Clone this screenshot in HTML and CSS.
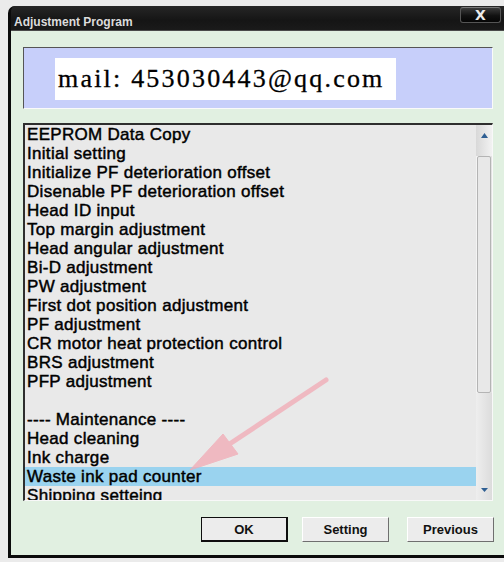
FILE: index.html
```html
<!DOCTYPE html>
<html>
<head>
<meta charset="utf-8">
<link rel="stylesheet" href="styles.css">
</head>
<body>
<div class="window">
  <div class="titlebar">
    <span class="title">Adjustment Program</span>
    <span class="close">X</span>
  </div>
  <div class="client">
    <div class="banner">
      <div class="mailbox">mail: 453030443@qq.com</div>
    </div>
    <div class="listbox">
      <ul class="items">
        <li>EEPROM Data Copy</li>
        <li>Initial setting</li>
        <li>Initialize PF deterioration offset</li>
        <li>Disenable PF deterioration offset</li>
        <li>Head ID input</li>
        <li>Top margin adjustment</li>
        <li>Head angular adjustment</li>
        <li>Bi-D adjustment</li>
        <li>PW adjustment</li>
        <li>First dot position adjustment</li>
        <li>PF adjustment</li>
        <li>CR motor heat protection control</li>
        <li>BRS adjustment</li>
        <li>PFP adjustment</li>
        <li>&nbsp;</li>
        <li>---- Maintenance ----</li>
        <li>Head cleaning</li>
        <li>Ink charge</li>
        <li class="selected">Waste ink pad counter</li>
        <li>Shipping setteing</li>
      </ul>
      <div class="scrollbar">
        <div class="sb-up">
          <svg width="7" height="5" viewBox="0 0 7 5"><polygon points="3.5,0 7,5 0,5" fill="#2f5f93"/></svg>
        </div>
        <div class="sb-thumb"></div>
        <div class="sb-track"></div>
        <div class="sb-down">
          <svg width="7" height="4" viewBox="0 0 7 4"><polygon points="0,0 7,0 3.5,4" fill="#2f5f93"/></svg>
        </div>
      </div>
    </div>
    <div class="buttons">
      <button class="btn btn-default">OK</button>
      <button class="btn btn-setting">Setting</button>
      <button class="btn btn-previous">Previous</button>
    </div>
  </div>
</div>
<svg class="pointer-arrow" width="504" height="562" viewBox="0 0 504 562">
  <g fill="#f2a9b4" stroke="#f2a9b4" opacity="0.75">
    <line x1="326" y1="380" x2="222" y2="449" stroke-width="5" stroke-linecap="round"/>
    <polygon points="190,470 223,434 238,454" stroke-width="1"/>
  </g>
</svg>
</body>
</html>
```

FILE: styles.css
```css
html, body {
  margin: 0;
  padding: 0;
  width: 504px;
  height: 562px;
  overflow: hidden;
  background: #ebebeb;
}

body {
  position: relative;
  padding-top: 6px;
  box-sizing: border-box;
}

.window {
  margin-left: 8px;
  width: 500px;
  height: 552px;
  border-left: 3px solid #0b0b0b;
  border-bottom: 3px solid #0b0b0b;
  border-top-left-radius: 7px;
  background: #1c1c1c;
  display: flex;
  flex-direction: column;
  overflow: hidden;
  box-sizing: border-box;
}

.titlebar {
  height: 25px;
  flex: none;
  display: flex;
  justify-content: space-between;
  align-items: flex-start;
  background: linear-gradient(#262626, #151515 60%, #1a1a1a);
  border-bottom: 1px solid #4a4a4a;
  box-sizing: border-box;
  padding-left: 3px;
}

.title {
  font-family: "Liberation Sans", Arial, sans-serif;
  font-weight: bold;
  font-size: 12px;
  color: #dcdcdc;
  line-height: 14px;
  margin-top: 9px;
}

.close {
  width: 41px;
  height: 16px;
  margin-top: 1px;
  margin-right: 7px;
  box-sizing: border-box;
  border: 1px solid #555;
  border-top-color: #777;
  border-radius: 3px;
  background: linear-gradient(#3a3a3a, #111 55%, #050505);
  color: #ececec;
  font-family: "DejaVu Sans", sans-serif;
  font-weight: bold;
  font-size: 14px;
  line-height: 14px;
  text-align: center;
}

.client {
  flex: 1;
  background: #e1f0e1;
  padding: 16px 0 0 12px;
}

.banner {
  width: 470px;
  height: 62px;
  box-sizing: border-box;
  background: #c7cffa;
  border-top: 1px solid #555;
  border-left: 1px solid #555;
  border-right: 1px solid #fafafa;
  border-bottom: 1px solid #fafafa;
  padding: 10px 0 0 31px;
}

.mailbox {
  width: 341px;
  height: 42px;
  background: #ffffff;
  box-sizing: border-box;
  padding-left: 3px;
  font-family: "Liberation Serif", "Times New Roman", serif;
  font-size: 26px;
  letter-spacing: 2.2px;
  line-height: 42px;
  color: #000;
  -webkit-text-stroke: 0.3px #000;
  white-space: nowrap;
}

.listbox {
  margin-top: 14px;
  width: 470px;
  height: 378px;
  box-sizing: border-box;
  background: #e9e9e9;
  border-top: 2px solid #2e2e2e;
  border-left: 2px solid #2e2e2e;
  border-right: 1px solid #f8f8f8;
  border-bottom: 1px solid #f8f8f8;
  display: flex;
  overflow: hidden;
}

.items {
  flex: 1;
  margin: 0;
  padding: 0;
  list-style: none;
  overflow: hidden;
}

.items li {
  height: 19px;
  line-height: 19px;
  padding-left: 2px;
  font-family: "Liberation Sans", Arial, sans-serif;
  font-size: 17px;
  letter-spacing: 0.3px;
  -webkit-text-stroke: 0.45px #000;
  color: #000;
  white-space: nowrap;
}

.items li.selected {
  background: #9ad3ef;
}

.scrollbar {
  width: 16px;
  flex: none;
  display: flex;
  flex-direction: column;
  background: linear-gradient(to right, #f4f4f4, #e2e2e2);
}

.sb-up {
  height: 31px;
  display: flex;
  justify-content: center;
  padding-top: 8px;
  box-sizing: border-box;
  background: linear-gradient(to right, #d8d8d8, #f2f2f2);
}

.sb-thumb {
  height: 237px;
  box-sizing: border-box;
  border: 1px solid #b4b4b4;
  border-radius: 2px;
  background: #e8e8e8;
  margin: 0 1px;
}

.sb-track {
  flex: 1;
  background: linear-gradient(to right, #eeeeee, #dcdcdc);
}

.sb-down {
  height: 16px;
  display: flex;
  justify-content: center;
  align-items: flex-start;
  padding-top: 4px;
  box-sizing: border-box;
  background: linear-gradient(to right, #eeeeee, #dcdcdc);
}

.buttons {
  margin-top: 16px;
  width: 471px;
  display: flex;
  justify-content: flex-end;
}

.btn {
  width: 87px;
  height: 25px;
  box-sizing: border-box;
  background: #ececec;
  border: 1px solid;
  border-color: #ffffff #6f6f6f #6f6f6f #ffffff;
  font-family: "Liberation Sans", Arial, sans-serif;
  font-weight: bold;
  font-size: 13px;
  color: #111;
  padding: 0;
  margin: 0;
}

.btn-default {
  border: 2px solid #0e0e0e;
  border-top-width: 1px;
  border-left-width: 1px;
}

.btn-setting {
  margin-left: 14px;
}

.btn-previous {
  margin-left: 18px;
}

.pointer-arrow {
  position: absolute;
  left: 0;
  top: 0;
  pointer-events: none;
}
```
